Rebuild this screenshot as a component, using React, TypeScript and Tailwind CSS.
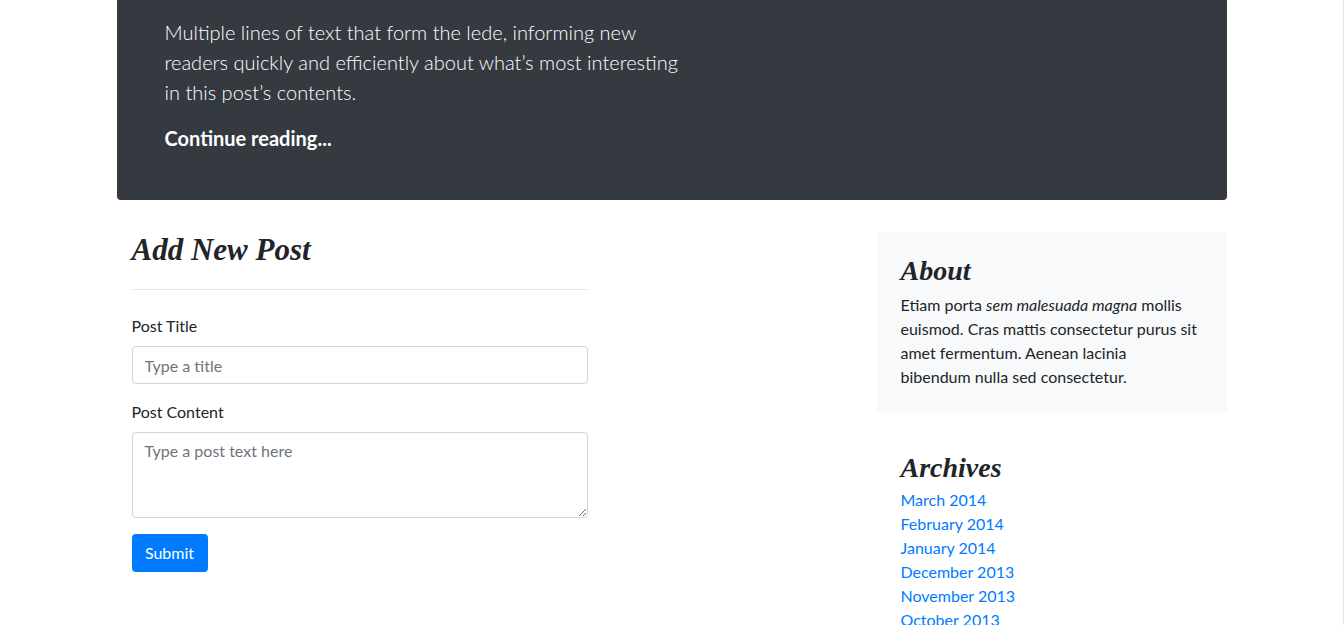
import React from "react";

const archives = [
  "March 2014",
  "February 2014",
  "January 2014",
  "December 2013",
  "November 2013",
  "October 2013",
];

// ── Jumbotron (scrolled, only bottom visible) ────────────────────────────────

function Hero() {
  return (
    <div className="rounded-b bg-[#343a40] px-12 pt-[17px] pb-[47px] text-white">
      <div className="w-[520px]">
        <p className="mb-4 text-[20px] font-light leading-[30px]">
          Multiple lines of text that form the lede, informing new readers quickly and efficiently
          about what’s most interesting in this post’s contents.
        </p>
        <p className="text-[20px] font-bold leading-[30px]">
          <a href="#">Continue reading...</a>
        </p>
      </div>
    </div>
  );
}

// ── Form ─────────────────────────────────────────────────────────────────────

function NewPostForm() {
  return (
    <div className="w-[456px]">
      <h3 className="font-['Liberation_Serif',serif] text-[31px] font-bold italic leading-[35px] text-[#212529]">
        Add New Post
      </h3>
      <hr className="mt-[22px] mb-6 border-t border-[#e2e4e7]" />
      <form className="flex flex-col" onSubmit={(e) => e.preventDefault()}>
        <label className="mb-2 text-[16px] leading-6 text-[#212529]">Post Title</label>
        <input
          type="text"
          placeholder="Type a title"
          className="mb-4 h-[38px] w-full rounded border border-[#ced4da] px-3 text-[16px] text-[#495057] placeholder:text-[#6c757d] focus:outline-none"
        />
        <label className="mb-2 text-[16px] leading-6 text-[#212529]">Post Content</label>
        <textarea
          placeholder="Type a post text here"
          className="mb-4 h-[86px] w-full rounded border border-[#ced4da] px-3 py-1.5 text-[16px] leading-6 text-[#495057] placeholder:text-[#6c757d] focus:outline-none"
        />
        <div>
          <button
            type="submit"
            className="h-[38px] w-[76px] rounded bg-[#007bff] text-[16px] text-white"
          >
            Submit
          </button>
        </div>
      </form>
    </div>
  );
}

// ── Sidebar ──────────────────────────────────────────────────────────────────

function Sidebar() {
  return (
    <aside className="w-[350px]">
      <div className="mb-4 rounded bg-[#f8f9fa] p-6">
        <h4 className="mb-[7px] font-['Liberation_Serif',serif] text-[28px] font-bold italic leading-[30px] text-[#212529]">
          About
        </h4>
        <p className="w-[297px] text-[16px] leading-6 text-[#212529]">
          Etiam porta <em>sem malesuada magna</em> mollis euismod. Cras mattis consectetur purus sit
          amet fermentum. Aenean lacinia bibendum nulla sed consectetur.
        </p>
      </div>
      <div className="p-6">
        <h4 className="mb-[5px] font-['Liberation_Serif',serif] text-[28px] font-bold italic leading-[30px] text-[#212529]">
          Archives
        </h4>
        <ol className="text-[16px] leading-6">
          {archives.map((a) => (
            <li key={a}>
              <a href="#" className="text-[#007bff]">
                {a}
              </a>
            </li>
          ))}
        </ol>
      </div>
    </aside>
  );
}

export default function App() {
  return (
    <div className="h-[625px] overflow-hidden border-r border-[#e6e6e6] bg-white font-['Lato','Liberation_Sans',sans-serif]">
      <div className="mx-auto w-[1110px]">
        <Hero />
        <div className="mt-8 flex justify-between">
          <div className="pl-[15px]">
            <NewPostForm />
          </div>
          <Sidebar />
        </div>
      </div>
    </div>
  );
}
